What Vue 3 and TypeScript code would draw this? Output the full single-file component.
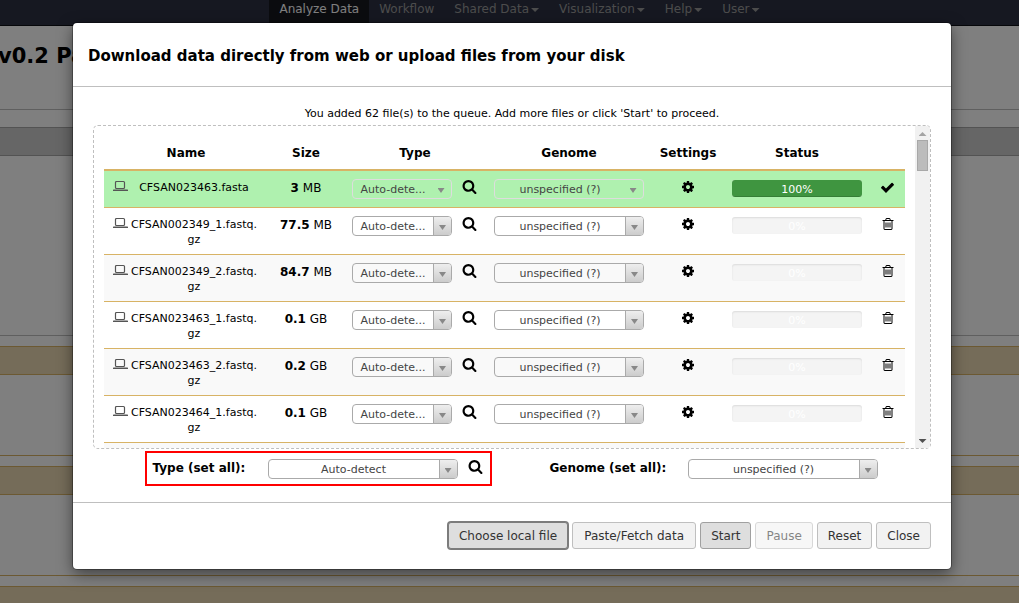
<script setup lang="ts">
import { ref } from 'vue'

interface UploadFile {
  name: string
  size: string
  unit: string
  percent: number
  done: boolean
}

const icons = {
  search:
    'M1216 832q0-185-131.5-316.5t-316.5-131.5-316.5 131.5-131.5 316.5 131.5 316.5 316.5 131.5 316.5-131.5 131.5-316.5zm512 832q0 52-38 90t-90 38q-54 0-90-38l-343-342q-179 124-399 124-143 0-273.5-55.5t-225-150-150-225-55.5-273.5 55.5-273.5 150-225 225-150 273.5-55.5 273.5 55.5 225 150 150 225 55.5 273.5q0 220-124 399l343 343q37 37 37 90z',
  cog:
    'M1152 896q0-106-75-181t-181-75-181 75-75 181 75 181 181 75 181-75 75-181zm512-109v222q0 12-8 23t-20 13l-185 28q-19 54-39 91 35 50 107 138 10 12 10 25t-9 23q-27 37-99 108t-94 71q-12 0-26-9l-138-108q-44 23-91 38-16 136-29 186-7 28-36 28h-222q-14 0-24.5-8.5t-11.5-21.5l-28-184q-49-16-90-37l-141 107q-10 9-25 9-14 0-25-11-126-114-165-168-7-10-7-23 0-12 8-23 15-21 51-66.5t54-70.5q-27-50-41-99l-183-27q-13-2-21-12.5t-8-23.5v-222q0-12 8-23t19-13l186-28q14-46 39-92-40-57-107-138-10-12-10-24 0-10 9-23 26-36 98.5-107.5t94.5-71.5q13 0 26 10l138 107q44-23 91-38 16-136 29-186 7-28 36-28h222q14 0 24.5 8.5t11.5 21.5l28 184q49 16 90 37l142-107q9-9 24-9 13 0 25 10 129 119 165 170 7 8 7 22 0 12-8 23-15 21-51 66.5t-54 70.5q26 50 41 98l183 28q13 2 21 12.5t8 23.5z',
  check:
    'M1671 566q0 40-28 68l-724 724-136 136q-28 28-68 28t-68-28l-136-136-362-362q-28-28-28-68t28-68l136-136q28-28 68-28t68 28l294 295 656-657q28-28 68-28t68 28l136 136q28 28 28 68z',
  trash:
    'M704 736v576q0 14-9 23t-23 9h-64q-14 0-23-9t-9-23v-576q0-14 9-23t23-9h64q14 0 23 9t9 23zm256 0v576q0 14-9 23t-23 9h-64q-14 0-23-9t-9-23v-576q0-14 9-23t23-9h64q14 0 23 9t9 23zm256 0v576q0 14-9 23t-23 9h-64q-14 0-23-9t-9-23v-576q0-14 9-23t23-9h64q14 0 23 9t9 23zm128 724v-948h-896v948q0 22 7 40.5t14.5 27 10.5 8.5h832q3 0 10.5-8.5t14.5-27 7-40.5zm-672-1076h448l-48-117q-7-9-17-11h-317q-10 2-17 11zm928 32v64q0 14-9 23t-23 9h-96v948q0 83-47 143.5t-113 60.5h-832q-66 0-113-58.5t-47-141.5v-952h-96q-14 0-23-9t-9-23v-64q0-14 9-23t23-9h309l70-167q15-37 54-63t79-26h320q40 0 79 26t54 63l70 167h309q14 0 23 9t9 23z',
}

const tabs = [
  { label: 'Analyze Data', menu: false, active: true },
  { label: 'Workflow', menu: false, active: false },
  { label: 'Shared Data', menu: true, active: false },
  { label: 'Visualization', menu: true, active: false },
  { label: 'Help', menu: true, active: false },
  { label: 'User', menu: true, active: false },
]

const files = ref<UploadFile[]>([
  { name: 'CFSAN023463.fasta', size: '3', unit: 'MB', percent: 100, done: true },
  { name: 'CFSAN002349_1.fastq.gz', size: '77.5', unit: 'MB', percent: 0, done: false },
  { name: 'CFSAN002349_2.fastq.gz', size: '84.7', unit: 'MB', percent: 0, done: false },
  { name: 'CFSAN023463_1.fastq.gz', size: '0.1', unit: 'GB', percent: 0, done: false },
  { name: 'CFSAN023463_2.fastq.gz', size: '0.2', unit: 'GB', percent: 0, done: false },
  { name: 'CFSAN023464_1.fastq.gz', size: '0.1', unit: 'GB', percent: 0, done: false },
])
</script>

<template>
  <div class="screen">
    <div class="page">
      <nav class="masthead">
        <a v-for="tab in tabs" :key="tab.label" href="#" class="tab" :class="{ active: tab.active }">
          {{ tab.label }}<span v-if="tab.menu" class="caret"></span>
        </a>
      </nav>
      <h1 class="page-title">v0.2 Pa</h1>
      <section class="card first"><div class="card-head"></div></section>
      <section class="card tan"><div class="card-head"></div></section>
      <section class="card tan"><div class="card-head"></div></section>
      <section class="card tan"><div class="card-head"></div></section>
    </div>

    <div class="backdrop">
      <div class="modal" role="dialog" aria-labelledby="upload-title">
        <header class="modal-header">
          <h2 id="upload-title">Download data directly from web or upload files from your disk</h2>
        </header>

        <div class="modal-body">
          <p class="info">You added 62 file(s) to the queue. Add more files or click 'Start' to proceed.</p>

          <div class="upload-box">
            <div class="list">
              <table>
                <colgroup>
                  <col />
                  <col class="c-size" />
                  <col class="c-type" />
                  <col class="c-genome" />
                  <col class="c-settings" />
                  <col class="c-status" />
                  <col class="c-action" />
                </colgroup>
                <thead>
                  <tr>
                    <th>Name</th>
                    <th>Size</th>
                    <th>Type</th>
                    <th>Genome</th>
                    <th>Settings</th>
                    <th>Status</th>
                    <th></th>
                  </tr>
                </thead>
                <tbody>
                  <tr v-for="file in files" :key="file.name" :class="{ done: file.done }">
                    <td>
                      <div class="name-cell">
                        <svg class="laptop" viewBox="0 0 16 13" aria-hidden="true">
                          <rect x="3.5" y="2.5" width="9" height="7" rx="1" fill="none" stroke="currentColor" stroke-width="1.2" />
                          <rect x="1" y="10.5" width="15" height="1.5" rx="0.6" fill="currentColor" />
                        </svg>
                        <span class="name">{{ file.name }}</span>
                      </div>
                    </td>
                    <td class="size"><b>{{ file.size }}</b> {{ file.unit }}</td>
                    <td>
                      <div class="type-cell">
                        <span class="pick pick-type" :class="{ off: file.done }">
                          <select aria-label="Type" :disabled="file.done"><option>Auto-dete...</option></select>
                          <span class="arrow"></span>
                        </span>
                        <button type="button" class="icon-btn" aria-label="Type details">
                          <svg class="icon" viewBox="0 0 1792 1792"><path :d="icons.search" /></svg>
                        </button>
                      </div>
                    </td>
                    <td>
                      <span class="pick" :class="{ off: file.done }">
                        <select aria-label="Genome" :disabled="file.done"><option>unspecified (?)</option></select>
                        <span class="arrow"></span>
                      </span>
                    </td>
                    <td>
                      <button type="button" class="icon-btn centered" aria-label="Settings">
                        <svg class="icon small" viewBox="0 0 1792 1792"><path :d="icons.cog" /></svg>
                      </button>
                    </td>
                    <td>
                      <div class="progress" role="progressbar" aria-label="Upload" :aria-valuenow="file.percent">
                        <div class="bar" :style="{ width: file.percent + '%' }"></div>
                        <span class="percent">{{ file.percent }}%</span>
                      </div>
                    </td>
                    <td>
                      <button type="button" class="icon-btn centered" :aria-label="file.done ? 'Uploaded' : 'Remove'">
                        <svg class="icon" :class="{ small: !file.done }" viewBox="0 0 1792 1792">
                          <path :d="file.done ? icons.check : icons.trash" />
                        </svg>
                      </button>
                    </td>
                  </tr>
                </tbody>
              </table>
              <div class="next-row"></div>
            </div>
            <div class="scrollbar">
              <span class="up"></span>
              <span class="thumb"></span>
              <span class="down"></span>
            </div>
          </div>

          <div class="set-all">
            <div class="group marked">
              <label for="all-type" class="type-label">Type (set all):</label>
              <span class="pick">
                <select id="all-type"><option>Auto-detect</option></select>
                <span class="arrow"></span>
              </span>
              <button type="button" class="icon-btn" aria-label="Type details">
                <svg class="icon" viewBox="0 0 1792 1792"><path :d="icons.search" /></svg>
              </button>
            </div>
            <div class="group">
              <label for="all-genome" class="genome-label">Genome (set all):</label>
              <span class="pick">
                <select id="all-genome"><option>unspecified (?)</option></select>
                <span class="arrow"></span>
              </span>
            </div>
          </div>
        </div>

        <footer class="modal-footer">
          <button type="button" class="btn pressed focused">Choose local file</button>
          <button type="button" class="btn wide">Paste/Fetch data</button>
          <button type="button" class="btn pressed">Start</button>
          <button type="button" class="btn" disabled>Pause</button>
          <button type="button" class="btn">Reset</button>
          <button type="button" class="btn">Close</button>
        </footer>
      </div>
    </div>
  </div>
</template>

<style>
html,
body {
  margin: 0;
  overflow: hidden;
}
</style>

<style scoped>
* {
  box-sizing: border-box;
}
.screen {
  position: relative;
  height: 100vh;
  overflow: hidden;
  background: #fff;
  color: #000;
  font-family: 'DejaVu Sans', Verdana, sans-serif;
  font-size: 12px;
}

/* page behind the dialog */
.masthead {
  display: flex;
  justify-content: center;
  height: 26px;
  padding-left: 20px;
  background: #2c3143;
  border-bottom: 1px solid #0c0e14;
}
.tab {
  display: flex;
  padding: 0 10px;
  line-height: 18px;
  color: #999;
  text-decoration: none;
}
.tab.active {
  background: #16181f;
  color: #fff;
}
.caret {
  width: 8px;
  height: 4px;
  margin: 8px 0 0 2px;
  background: currentColor;
  clip-path: polygon(0 0, 100% 0, 50% 100%);
}
.page-title {
  height: 84px;
  margin: 0 0 17px;
  padding-top: 18px;
  border-bottom: 1px solid #bfbfbf;
  font-size: 21px;
  line-height: 24px;
  text-indent: -2px;
}
.card {
  height: 110px;
  margin-bottom: 10px;
  border-bottom: 1px solid #d8b365;
}
.card.first {
  height: 209px;
  border-color: #bfbfbf;
}
.card-head {
  height: 29px;
  background: #ccc;
  border-top: 1px solid #a6a6a6;
  border-bottom: 1px solid #a6a6a6;
}
.tan .card-head {
  background: #ebd9b2;
  border-color: #d8b365;
}

/* dialog */
.backdrop {
  position: absolute;
  inset: 0;
  padding: 23px 68px 0 73px;
  background: rgba(0, 0, 0, 0.5);
}
.modal {
  background: #fff;
  border-radius: 4px;
  box-shadow: 0 5px 15px rgba(0, 0, 0, 0.5), 0 0 0 1px rgba(0, 0, 0, 0.3);
}
.modal-header {
  padding: 22px 15px 19px;
  border-bottom: 1px solid #bfbfbf;
}
h2 {
  margin: 0;
  font-size: 15px;
  line-height: 22px;
}
.modal-body {
  padding: 19px 20px 16px;
}
.info {
  margin: 0 0 3px;
  font-size: 11px;
  line-height: 16px;
  text-align: center;
}
.upload-box {
  display: flex;
  height: 324px;
  border: 1px dashed #bfbfbf;
  border-radius: 5px;
  overflow: hidden;
}
.list {
  display: flex;
  flex: 1;
  flex-direction: column;
  padding: 10px 10px 0;
}
.next-row {
  flex: 1;
  background: #f9f9f9;
}
.scrollbar {
  display: flex;
  flex-direction: column;
  align-items: center;
  width: 15px;
  padding: 6px 0 5px;
  background: #f1f1f1;
}
.up,
.down {
  width: 8px;
  height: 4px;
  background: #a3a3a3;
  clip-path: polygon(50% 0, 100% 100%, 0 100%);
}
.down {
  margin-top: auto;
  background: #505050;
  clip-path: polygon(0 0, 100% 0, 50% 100%);
}
.thumb {
  width: 11px;
  height: 31px;
  margin-top: 4px;
  background: #bcbcbc;
  border: 1px solid #a8a8a8;
}

table {
  width: 100%;
  table-layout: fixed;
  border-collapse: separate;
  border-spacing: 0;
}
.c-size {
  width: 76px;
}
.c-type {
  width: 142px;
}
.c-genome {
  width: 166px;
}
.c-settings {
  width: 72px;
}
.c-status {
  width: 146px;
}
.c-action {
  width: 35px;
}
th {
  padding: 9px 0 7px;
  border-bottom: 2px solid #d8b365;
  font-size: 12px;
  line-height: 17px;
}
td {
  padding: 8px 8px 7px;
  border-bottom: 1px solid #d8b365;
  vertical-align: top;
  line-height: 15px;
}
tbody tr:nth-child(odd) {
  background: #f9f9f9;
}
tbody tr.done {
  background: #aff1af;
}
.size {
  padding: 9px 0 7px;
  line-height: 17px;
  text-align: center;
}
.name-cell {
  display: flex;
}
.laptop {
  flex: none;
  width: 16px;
  height: 13px;
  color: #555;
}
.name {
  flex: 1;
  padding-top: 1px;
  font-size: 11px;
  text-align: center;
  overflow-wrap: anywhere;
}
.type-cell {
  display: flex;
  gap: 10px;
  padding-bottom: 1px;
}

.pick {
  position: relative;
  display: block;
  width: 150px;
  height: 20px;
}
.pick-type {
  width: 100px;
}
.pick select {
  display: block;
  width: 100%;
  height: 20px;
  margin: 0;
  padding: 0 18px 0 0;
  appearance: none;
  background: transparent;
  border: 1px solid #aaa;
  border-radius: 4px;
  color: #444;
  font-family: inherit;
  font-size: 11px;
  text-align: center;
  text-align-last: center;
  opacity: 1;
}
.arrow {
  position: absolute;
  inset: 1px 1px 1px auto;
  display: flex;
  align-items: center;
  justify-content: center;
  width: 18px;
  padding-top: 3px;
  background: linear-gradient(#eee, #ccc);
  border-left: 1px solid #aaa;
  border-radius: 0 3px 3px 0;
  pointer-events: none;
}
.arrow::before {
  content: '';
  width: 7px;
  height: 5px;
  background: #888;
  clip-path: polygon(0 0, 100% 0, 50% 100%);
}
.off select {
  border-color: #ddd;
}
.off .arrow {
  right: 2px;
  background: none;
  border: 0;
}

.icon-btn {
  display: flex;
  align-items: center;
  justify-content: center;
  width: 15px;
  height: 15px;
  padding: 0;
  background: none;
  border: 0;
  color: #000;
}
.icon-btn.centered {
  width: 15px;
  height: 16px;
  margin: 0 auto;
}
.icon {
  flex: none;
  width: 15px;
  height: 15px;
  fill: currentColor;
}
.icon.small {
  width: 14px;
  height: 14px;
}

.progress {
  position: relative;
  height: 17px;
  margin-top: 1px;
  background: #f4f4f4;
  border-radius: 3px;
  box-shadow: inset 0 1px 2px rgba(0, 0, 0, 0.1);
  overflow: hidden;
}
.bar {
  height: 100%;
  background: #3f9540;
  box-shadow: inset 0 -1px 0 rgba(0, 0, 0, 0.15);
}
.percent {
  position: absolute;
  inset: 0;
  color: #fff;
  font-size: 11px;
  line-height: 19px;
  text-align: center;
}

.set-all {
  display: flex;
  justify-content: center;
  gap: 58px;
  margin-top: 2px;
  padding-right: 2px;
}
.group {
  display: flex;
  gap: 20px;
  padding: 8px 0 7px;
}
.marked {
  padding: 6px 7px 5px 6px;
  border: 2px solid #f00;
}
.group label {
  font-weight: bold;
  line-height: 19px;
}
.type-label {
  min-width: 95px;
}
.genome-label {
  min-width: 118px;
}
.group .pick {
  width: 190px;
}
.group .icon-btn {
  margin-left: -10px;
}

.modal-footer {
  display: flex;
  justify-content: flex-end;
  gap: 4px;
  padding: 19px 20px 20px;
  border-top: 1px solid #bfbfbf;
}
.btn {
  height: 27px;
  padding: 0 10px;
  background: #f2f2f2;
  border: 1px solid #bfbfbf;
  border-radius: 3px;
  color: #333;
  font-family: inherit;
  font-size: 12px;
}
.btn.wide {
  min-width: 124px;
}
.btn.pressed {
  background: #dedede;
  border-color: #a0a0a0;
}
.btn.focused {
  border-color: #7c7c7c;
  box-shadow: 0 0 0 1px #7c7c7c;
}
.btn:disabled {
  opacity: 0.6;
}
</style>
